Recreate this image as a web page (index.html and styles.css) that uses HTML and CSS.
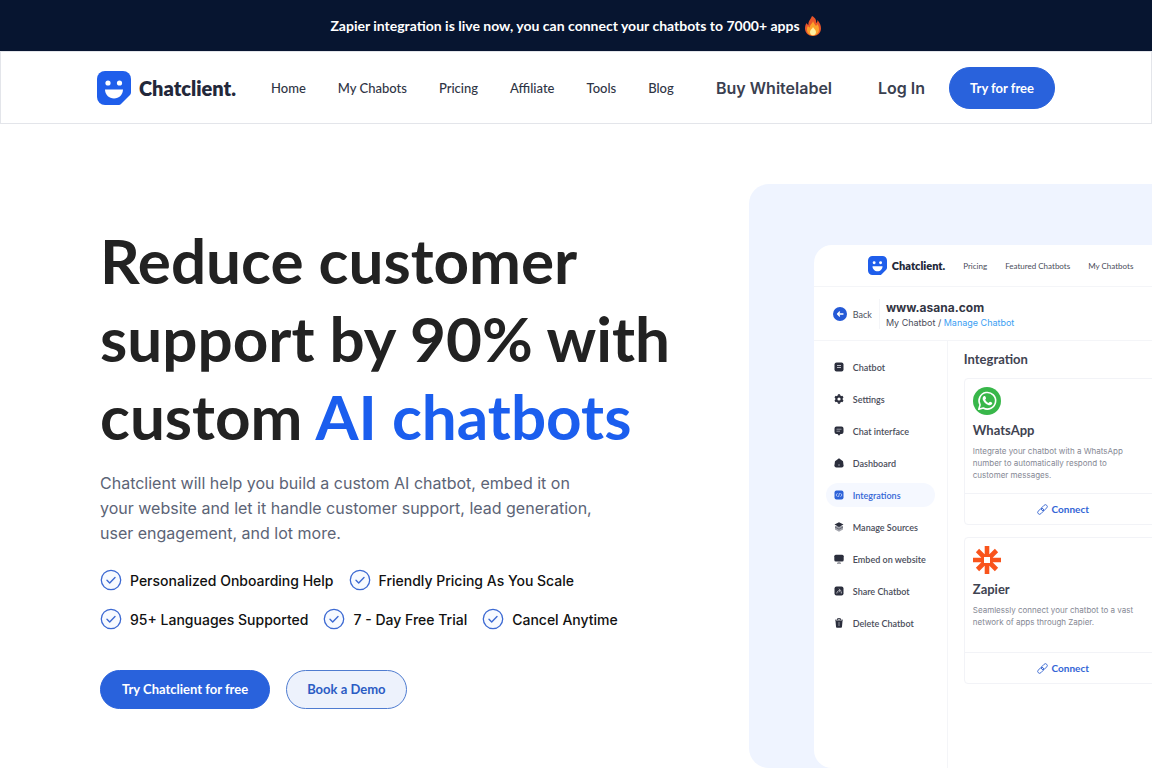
FILE: index.html
```html
<!DOCTYPE html>
<html lang="en">
<head>
    <meta charset="UTF-8">
    <meta name="viewport" content="width=device-width, initial-scale=1.0">
    <title>Chatclient - AI chatbots</title>
    <link rel="stylesheet" href="styles.css">
</head>
<body>
    <!-- shared icons -->
    <svg class="sprite" aria-hidden="true">
        <symbol id="logo" viewBox="0 0 34 34">
            <path fill="#1f5eeb" d="M8 0h18a8 8 0 0 1 8 8v13c0 1.500-.5 2.500-1.500 3.500l-8 8c-1 1-2 1.500-3.500 1.500H8a8 8 0 0 1-8-8V8a8 8 0 0 1 8-8z"/>
            <circle cx="11" cy="12" r="2.600" fill="#fff"/>
            <circle cx="22.500" cy="12" r="2.600" fill="#fff"/>
            <path fill="#fff" d="M8 18.500h18c0 5-4 9-9 9s-9-4-9-9z"/>
        </symbol>
        <symbol id="check" viewBox="0 0 24 24">
            <circle cx="12" cy="12" r="9.700" fill="#f7faff" stroke="#3c69d2" stroke-width="1.300"/>
            <path fill="none" stroke="#3c69d2" stroke-width="1.400" stroke-linecap="round" stroke-linejoin="round" d="M8 12.300l2.700 2.600 5.300-5.400"/>
        </symbol>
        <symbol id="link" viewBox="0 0 12 12">
            <g fill="none" stroke="#3c69d2" stroke-width="1" transform="rotate(-45 6 6)">
                <rect x="-.5" y="4" width="7.500" height="4" rx="2"/>
                <rect x="5" y="4" width="7.500" height="4" rx="2"/>
            </g>
        </symbol>
    </svg>

    <div class="banner">
        <p>Zapier integration is live now, you can connect your chatbots to 7000+ apps</p>
        <svg class="fire" viewBox="0 0 18 20" aria-hidden="true">
            <path fill="#e8552a" d="M8 0c4 2 4.500 5 4 7 1-.5 1.500-1.500 1.500-3C16 7 17 9.500 17 12.500 17 17 13.500 20 9 20s-8-3-8-7.500c0-2 .5-4 1.500-5.500.5 1 1 1.500 2 2C4 5.500 6.500 3.500 8 0z"/>
            <path fill="#fba22b" d="M9 5c1 2.500 2 3.500 3 5 .8-.5 1-1.200 1.200-2C15 10 15 12 15 13.500c0 3.500-2.500 6-6 6s-6-2.500-6-6c0-1.500.3-2.500 1-3.500.6.8 1 1.200 2 1.500C5.500 8.500 8.500 8 9 5z"/>
            <path fill="#fff0a0" d="M9 11c.5 1.500 3 2.500 3 5 0 2-1.300 3.300-3 3.300S6 18 6 16c0-2.500 2.500-3 3-5z"/>
        </svg>
    </div>

    <header class="header">
        <a class="brand" href="#">
            <svg class="brand-icon"><use href="#logo"/></svg>
            <span>Chatclient.</span>
        </a>
        <nav class="nav">
            <a href="#">Home</a>
            <a href="#">My Chabots</a>
            <a href="#">Pricing</a>
            <a href="#">Affiliate</a>
            <a href="#">Tools</a>
            <a href="#">Blog</a>
        </nav>
        <div class="account">
            <a class="account-link" href="#">Buy Whitelabel</a>
            <a class="account-link" href="#">Log In</a>
            <a class="btn btn-header" href="#">Try for free</a>
        </div>
    </header>

    <main class="hero">
        <section class="intro">
            <h1>Reduce customer<br>support by 90% with<br>custom <span class="blue">AI chatbots</span></h1>
            <p class="lead">Chatclient will help you build a custom AI chatbot, embed it on<br>your website and let it handle customer support, lead generation,<br>user engagement, and lot more.</p>
            <ul class="features">
                <li><svg><use href="#check"/></svg>Personalized Onboarding Help</li>
                <li><svg><use href="#check"/></svg>Friendly Pricing As You Scale</li>
                <li><svg><use href="#check"/></svg>95+ Languages Supported</li>
                <li><svg><use href="#check"/></svg>7 - Day Free Trial</li>
                <li><svg><use href="#check"/></svg>Cancel Anytime</li>
            </ul>
            <div class="actions">
                <a class="btn" href="#">Try Chatclient for free</a>
                <a class="btn btn-outline" href="#">Book a Demo</a>
            </div>
        </section>

        <section class="preview">
            <div class="app">
                <div class="app-top">
                    <a class="app-brand" href="#">
                        <svg><use href="#logo"/></svg>
                        <span>Chatclient.</span>
                    </a>
                    <a href="#">Pricing</a>
                    <a href="#">Featured Chatbots</a>
                    <a href="#">My Chatbots</a>
                </div>

                <div class="app-title">
                    <a class="back" href="#">
                        <svg viewBox="0 0 14 14">
                            <circle cx="7" cy="7" r="7" fill="#2459d6"/>
                            <path fill="none" stroke="#fff" stroke-width="1.300" stroke-linecap="round" stroke-linejoin="round" d="M10 7H4.500M6.500 5l-2 2 2 2"/>
                        </svg>
                        Back
                    </a>
                    <div class="site">
                        <h2>www.asana.com</h2>
                        <p>My Chatbot / <a href="#">Manage Chatbot</a></p>
                    </div>
                </div>

                <div class="app-body">
                    <nav class="side">
                        <a href="#">
                            <svg viewBox="0 0 10 10"><rect x=".5" y=".5" width="9" height="9" rx="2" fill="#2b2e3c"/><path stroke="#b8bac4" d="M3 3.500h4M3 5.500h4"/></svg>
                            Chatbot
                        </a>
                        <a href="#">
                            <svg viewBox="0 0 10 10"><circle cx="5" cy="5" r="2.700" fill="none" stroke="#2b2e3c" stroke-width="2.200"/><path stroke="#2b2e3c" stroke-width="2.200" d="M5 .3v1.500M5 8.200v1.500M1 2.600l1.300.8M7.700 6.600l1.300.8M1 7.400l1.300-.8M7.700 3.400L9 2.600"/></svg>
                            Settings
                        </a>
                        <a href="#">
                            <svg viewBox="0 0 10 10"><path fill="#2b2e3c" d="M2.500.5h5a2 2 0 0 1 2 2v3.500a2 2 0 0 1-2 2H6.500L5 9.700 3.500 8h-1a2 2 0 0 1-2-2V2.500a2 2 0 0 1 2-2z"/><path stroke="#b8bac4" stroke-width=".8" d="M2.500 3.200h5M2.500 5.200h3.500"/></svg>
                            Chat interface
                        </a>
                        <a href="#">
                            <svg viewBox="0 0 10 10"><path fill="#2b2e3c" d="M5 .3l4 2.900.6 4.300a2 2 0 0 1-2 2H2.400a2 2 0 0 1-2-2L1 3.200z"/><path stroke="#9a9ca8" stroke-width=".9" d="M5 6v2"/></svg>
                            Dashboard
                        </a>
                        <a class="active" href="#">
                            <svg viewBox="0 0 10 10"><rect x=".5" y=".5" width="9" height="9" rx="2" fill="#2d62d8"/><path fill="none" stroke="#c8d8ff" stroke-width=".8" d="M3.500 3.200L2 5l1.500 1.800M6.500 3.200L8 5 6.500 6.800M5.500 3l-1 4"/></svg>
                            Integrations
                        </a>
                        <a href="#">
                            <svg viewBox="0 0 10 10"><path fill="#a3a5ad" d="M1 4v3.500l4 2.200 4-2.200V4z"/><path fill="#2b2e3c" d="M5 .3l4.500 2.300L5 5 .5 2.600z"/><path fill="none" stroke="#555864" stroke-width=".8" d="M1 5l4 2.200L9 5"/></svg>
                            Manage Sources
                        </a>
                        <a href="#">
                            <svg viewBox="0 0 10 10"><rect x=".3" y=".8" width="9.400" height="6.700" rx="1.500" fill="#2b2e3c"/><path stroke="#74767f" d="M5 7.500v1.500M3 9.200h4"/></svg>
                            Embed on website
                        </a>
                        <a href="#">
                            <svg viewBox="0 0 10 10"><rect x=".5" y=".5" width="9" height="9" rx="2" fill="#2b2e3c"/><path fill="none" stroke="#d5d6dc" stroke-width=".8" d="M2.800 7.500C3 5.500 4 4.500 6 4.500M4.800 2.800L6.800 4.500 5 6.300M7.300 5.500v2"/></svg>
                            Share Chatbot
                        </a>
                        <a href="#">
                            <svg viewBox="0 0 10 10"><path fill="#2b2e3c" d="M1.500 3h7L8 8.500C8 9.300 7.500 9.800 6.700 9.800H3.300C2.500 9.800 2 9.300 2 8.500z"/><path fill="none" stroke="#2b2e3c" stroke-width=".9" d="M1 2.200h8M3.600 2V.6h2.800V2"/><path stroke="#b8bac4" stroke-width=".7" d="M4 5h2M4 7h2"/></svg>
                            Delete Chatbot
                        </a>
                    </nav>

                    <div class="board">
                        <h3>Integration</h3>
                        <article class="card">
                            <div class="card-text">
                                <svg viewBox="0 0 28 28">
                                    <circle cx="14" cy="14" r="14" fill="#38b74a"/>
                                    <path fill="none" stroke="#fff" stroke-width="1.600" stroke-linejoin="round" d="M5.800 22.300l1.300-4.500a8.300 8.300 0 1 1 3.200 3.200z"/>
                                    <path fill="#fff" d="M10.700 9.200c.7-.5 1.400-.4 1.700.3l.6 1.500c.2.600-.6 1.200-.8 1.700.7 1.600 1.900 2.600 3.400 3.200.6-.3 1-1.300 1.600-1.100l1.700.8c.7.400.3 1.500-.3 2-1.500 1.200-4 .4-6-1.200-2.300-1.900-4.200-5.200-1.900-7.200z"/>
                                </svg>
                                <h4>WhatsApp</h4>
                                <p>Integrate your chatbot with a WhatsApp<br>number to automatically respond to<br>customer messages.</p>
                            </div>
                            <button class="connect" type="button"><svg><use href="#link"/></svg>Connect</button>
                        </article>
                        <article class="card">
                            <div class="card-text">
                                <svg viewBox="0 0 28 28">
                                    <g stroke="#f9541c" stroke-width="4.600">
                                        <path d="M14 0v10M14 18v10M0 14h10M18 14h10M4.500 4.500L11 11M17 17l6.500 6.500M23.500 4.500L17 11M11 17l-6.500 6.500"/>
                                    </g>
                                    <path fill="none" stroke="#f9541c" stroke-width="2" d="M10 10h8v8h-8z"/>
                                    <rect x="11" y="11" width="6" height="6" fill="#fff"/>
                                </svg>
                                <h4>Zapier</h4>
                                <p>Seamlessly connect your chatbot to a vast<br>network of apps through Zapier.</p>
                            </div>
                            <button class="connect" type="button"><svg><use href="#link"/></svg>Connect</button>
                        </article>
                    </div>
                </div>
            </div>
        </section>
    </main>
</body>
</html>
```

FILE: styles.css
```css
* {
    box-sizing: border-box;
}
body {
    margin: 0;
    font-family: Lato, sans-serif;
    color: #222;
    background: #fff;
    overflow-x: hidden;
}
h1, h2, h3, h4, p, ul {
    margin: 0;
    padding: 0;
}
a {
    color: inherit;
    text-decoration: none;
    white-space: nowrap;
}
svg {
    flex: none;
}
.sprite {
    display: none;
}

/* top banner */
.banner {
    display: flex;
    align-items: center;
    justify-content: center;
    gap: 4px;
    padding: 14px 16px;
    background: #071530;
    color: #fff;
    font-size: 14px;
    font-weight: 700;
    line-height: 23px;
}
.fire {
    width: 18px;
    height: 20px;
}

/* header */
.header {
    display: flex;
    align-items: center;
    padding: 15px 96px 14px;
    border: 1px solid #e3e5ea;
    color: #2f3545;
}
.brand {
    display: flex;
    align-items: center;
    gap: 8px;
    font-size: 20px;
    font-weight: 800;
    color: #23283a;
}
.brand-icon {
    width: 34px;
    height: 34px;
}
.nav {
    display: flex;
    gap: 32px;
    margin-left: 35px;
    font-size: 13px;
    font-weight: 500;
}
.account {
    display: flex;
    align-items: center;
    margin-left: auto;
}
.account-link {
    margin-right: 24px;
    font-family: Inter, sans-serif;
    font-size: 16px;
    font-weight: 600;
    color: #3a4050;
}
.account-link:first-child {
    margin-right: 46px;
}
.btn {
    display: block;
    padding: 0 21px;
    border: 1px solid #2962dc;
    border-radius: 21px;
    background: #2962dc;
    color: #fff;
    font-size: 13px;
    font-weight: 700;
    line-height: 37px;
}
.btn-header {
    padding: 0 20px;
    line-height: 40px;
}
.btn-outline {
    padding: 0 20px;
    background: #edf2fc;
    border-color: #4f7cd0;
    color: #2b5cc4;
}

/* hero */
.hero {
    display: grid;
    grid-template-columns: 65fr 35fr;
}
.intro {
    min-width: 0;
    padding: 97px 0 59px 100px;
}
h1 {
    font-size: 62px;
    font-weight: 700;
    line-height: 78px;
    white-space: nowrap;
}
.blue {
    color: #1b5eee;
}
.lead {
    margin-top: 16px;
    font-family: Inter, sans-serif;
    font-size: 16px;
    line-height: 25px;
    color: #5c6476;
}
.features {
    display: flex;
    flex-wrap: wrap;
    gap: 15px 14px;
    margin: 22px 90px 0 -1px;
    list-style: none;
    font-family: Inter, sans-serif;
    font-size: 14px;
    font-weight: 500;
    color: #111;
}
.features li {
    display: flex;
    align-items: center;
    gap: 7px;
}
.features svg {
    width: 24px;
    height: 24px;
}
.actions {
    display: flex;
    gap: 16px;
    margin-top: 39px;
}

/* app preview */
.preview {
    min-width: 0;
    margin-top: 60px;
    padding: 61px 0 0 65px;
    border-radius: 20px 0 0 20px;
    background: #eff4ff;
    overflow: hidden;
}
.app {
    display: flex;
    flex-direction: column;
    height: 100%;
    border-radius: 18px 0 0 18px;
    background: #fff;
    color: #4a4d5a;
    font-size: 8px;
}
.app-top {
    display: flex;
    align-items: center;
    gap: 18px;
    padding: 10px 0 10px 54px;
    border-bottom: 1px solid #f4f5f8;
}
.app-brand {
    display: flex;
    align-items: center;
    gap: 5px;
    font-size: 11px;
    font-weight: 800;
    color: #23283a;
}
.app-brand svg {
    width: 19px;
    height: 21px;
}
.app-title {
    display: flex;
    align-items: center;
    padding: 12px 0 11px 19px;
    border-bottom: 1px solid #f4f5f8;
}
.back {
    display: flex;
    align-items: center;
    gap: 6px;
    padding-right: 7px;
    font-size: 9px;
}
.back svg {
    width: 14px;
    height: 14px;
}
.site {
    padding-left: 6px;
    border-left: 1px solid #f4f5f8;
    font-family: Inter, sans-serif;
}
.site h2 {
    font-size: 12px;
    font-weight: 700;
    line-height: 17px;
    color: #333644;
}
.site p {
    font-size: 9px;
    line-height: 13px;
}
.site p a {
    color: #3ba0f3;
}
.app-body {
    display: flex;
    flex: 1;
}
.side {
    display: flex;
    flex: none;
    flex-direction: column;
    gap: 8px;
    width: 134px;
    padding: 14px 12px;
    border-right: 1px solid #f4f5f8;
    font-size: 9px;
    font-weight: 600;
}
.side a {
    display: flex;
    align-items: center;
    gap: 9px;
    height: 24px;
    padding-left: 8px;
    border-radius: 12px;
}
.side svg {
    width: 10px;
    height: 10px;
}
.side .active {
    background: #f5f8ff;
    color: #3365d6;
}
.board {
    flex: none;
    width: 230px;
    padding: 8px 16px;
}
.board h3 {
    font-size: 13px;
    font-weight: 700;
    line-height: 20px;
    color: #404351;
}
.card {
    display: flex;
    flex-direction: column;
    height: 147px;
    margin: 9px 0 12px;
    border: 1px solid #f2f3f7;
    border-radius: 4px;
}
.card + .card {
    margin-top: 0;
}
.card-text {
    flex: 1;
    padding: 8px;
}
.card-text svg {
    display: block;
    width: 28px;
    height: 28px;
}
.card h4 {
    margin-top: 5px;
    font-size: 13px;
    font-weight: 700;
    line-height: 20px;
    color: #404351;
}
.card p {
    margin-top: 5px;
    font-family: Inter, sans-serif;
    font-size: 8px;
    line-height: 12px;
    color: #858894;
    white-space: nowrap;
}
.connect {
    display: flex;
    align-items: center;
    justify-content: center;
    gap: 4px;
    height: 31px;
    padding: 0;
    border: 0;
    border-top: 1px solid #f2f3f7;
    background: none;
    font-family: Lato, sans-serif;
    font-size: 10px;
    font-weight: 700;
    color: #3365d6;
}
.connect svg {
    width: 11px;
    height: 11px;
}
@media (max-width: 900px) {
    .header {
        flex-wrap: wrap;
        gap: 16px;
        padding: 15px 24px;
    }
    .nav {
        flex-wrap: wrap;
        margin-left: 0;
    }
    .hero {
        grid-template-columns: 1fr;
    }
    .intro {
        padding: 40px 24px;
    }
    h1 {
        font-size: 40px;
        line-height: 50px;
    }
    .features {
        margin-right: 0;
    }
}
```
